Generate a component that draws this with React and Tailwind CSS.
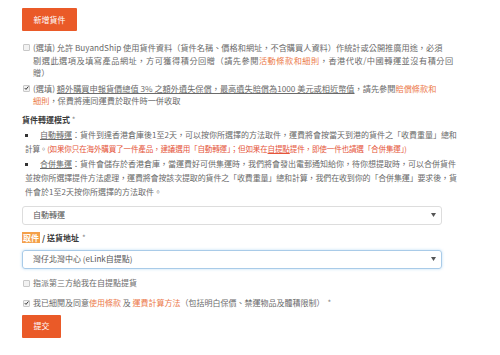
import React from "react";

function Box({ checked }) {
  return (
    <span className="mt-[3px] ml-[1px] mr-[3px] flex h-[7px] w-[7px] shrink-0 items-center justify-center rounded-[1px] border border-[#c8c8c8] bg-[#f2f2f2]">
      {checked && (
        <svg width="6" height="6" viewBox="0 0 10 10">
          <path d="M1.5 5.2 L4 7.8 L8.8 2" fill="none" stroke="#333" strokeWidth="2" />
        </svg>
      )}
    </span>
  );
}

function Caret() {
  return (
    <svg width="5" height="4" viewBox="0 0 10 8">
      <path d="M0 0 H10 L5 8 Z" fill="#555" />
    </svg>
  );
}

function Dot() {
  return <span className="mr-[12px] inline-block h-[3px] w-[3px] align-middle bg-[#333]" />;
}

const link = "text-[#ec7a4a]";

export default function App() {
  return (
    <div className="h-[355px] w-[500px] bg-white pl-[22px] pt-[8px] font-['Noto_Sans_CJK_TC','Noto_Sans',sans-serif] text-[8px] text-[#6a6a6a]">
      <button className="h-[23px] w-[55px] rounded-[1px] bg-[#ea5a28] text-[8px] text-white">新增貨件</button>

      <div className="mt-[10px] flex text-[8.2px] leading-[12.5px]">
        <Box />
        <p className="whitespace-nowrap">
          (選填) 允許 BuyandShip 使用貨件資料（貨件名稱、價格和網址，不含購買人資料）作統計或公開推廣用途，必須
          <br />
          <span className="tracking-[0.5px]">
            剔選此選項及填寫產品網址，方可獲得積分回贈（請先參閱<span className={link}>活動條款和細則</span>，香港代收/中國轉運並沒有積分回
          </span>
          <br />
          贈）
        </p>
      </div>

      <div className="mt-[3px] flex text-[8.2px] leading-[12.5px]">
        <Box checked />
        <p className="whitespace-nowrap">
          (選填) <span className="underline">額外購買申報貨價總值 3% 之額外遺失保償，最高遺失賠償為1000 美元或相近幣值</span>，請先參閱<span className={link}>賠償條款和</span>
          <br />
          <span className={link}>細則</span>，保費將連同運費於取件時一併收取
        </p>
      </div>

      <div className="mt-[7px] font-bold leading-[12px] text-[#3a3a3a]">
        貨件轉運模式 <span className="font-normal text-[#888]">*</span>
      </div>

      <div className="mt-[2px] pl-[3px] leading-[14px]">
        <p className="whitespace-nowrap">
          <Dot />
          <span className="underline">自動轉運</span>：貨件到達香港倉庫後1至2天，可以按你所選擇的方法取件，運費將會按當天到港的貨件之「收費重量」總和
          <br />
          <span className="text-[7.6px] tracking-[-0.2px]">
            計算。<span className="text-[#e5553a]">(如果你只在海外購買了一件產品，建議選用「自動轉運」；但如果在<span className="underline">自提點</span>提件，即使一件也請選「合併集運」)</span>
          </span>
        </p>
        <p className="mt-[1px] whitespace-nowrap">
          <Dot />
          <span className="underline">合併集運</span>：貨件會儲存於香港倉庫，當運費好可供集運時，我們將會發出電郵通知給你，待你想提取時，可以合併貨件
          <br />
          <span className="tracking-[-0.15px]">
            並按你所選擇提件方法處理，運費將會按該次提取的貨件之「收費重量」總和計算，我們在收到你的「合併集運」要求後，貨
          </span>
          <br />
          件會於1至2天按你所選擇的方法取件。
        </p>
      </div>

      <div className="mt-[7px] flex h-[19px] w-[420px] items-center justify-between rounded-[3px] border border-[#ddd] pl-[10px] pr-[5px] text-[#555]">
        <span>自動轉運</span>
        <Caret />
      </div>

      <div className="mt-[7px] flex items-center font-bold leading-[11px] text-[#3a3a3a]">
        <span className="bg-[#f4a04a] px-[1px] text-white">取件</span>
        <span className="ml-[2px]">/ 送貨地址</span>
        <span className="ml-[3px] font-normal text-[#888]">*</span>
      </div>

      <div className="mt-[7px] flex h-[19px] w-[420px] items-center justify-between rounded-[3px] border border-[#a9cbe8] pl-[10px] pr-[5px] text-[#555] shadow-[0_0_3px_rgba(102,175,233,0.45)]">
        <span>灣仔北灣中心 (eLink自提點)</span>
        <Caret />
      </div>

      <div className="mt-[8px] flex leading-[12px]">
        <Box />
        <span>指派第三方給我在自提點提貨</span>
      </div>

      <div className="mt-[8px] flex leading-[12px]">
        <Box checked />
        <span>
          我已細閱及同意<span className={link}>使用條款</span> 及 <span className={link}>運費計算方法</span>（包括明白保價、禁運物品及體積限制）<span className="ml-[3px] text-[#888]">*</span>
        </span>
      </div>

      <button className="mt-[6px] h-[23px] w-[39px] rounded-[1px] bg-[#ea5a28] text-[8px] text-white">提交</button>
    </div>
  );
}
